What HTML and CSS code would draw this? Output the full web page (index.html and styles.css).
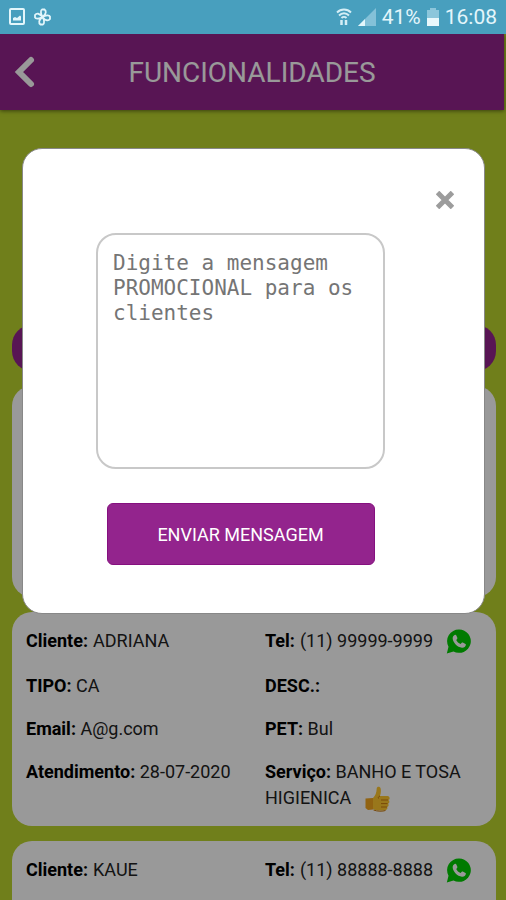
FILE: index.html
```html
<!DOCTYPE html>
<html lang="pt-BR">
<head>
<meta charset="utf-8">
<meta name="viewport" content="width=device-width, initial-scale=1">
<title>Funcionalidades</title>
<link rel="stylesheet" href="styles.css">
</head>
<body>
<svg class="defs" aria-hidden="true">
  <symbol id="whatsapp" viewBox="0 0 24 24">
    <path fill="#00cc00" d="M12.6 0.5a11.2 11.2 0 1 1-5.4 21L0.8 23.4 2.4 17A11.2 11.2 0 0 1 12.6 0.5z"/>
    <path fill="#fff" d="M8.6 5.5c.5-.2 1-.1 1.2.4l1.1 2.6c.1.4 0 .7-.2 1l-.9 1.1c.9 1.8 2.3 3.1 4.2 3.9l1.1-1.3c.3-.3.6-.4 1-.2l2.6 1.3c.4.2.5.5.4.9-.3 1.900-1.900 3-3.800 2.800C10.800 17.400 6.700 13 6.400 9.100c-.1-1.500.8-3 2.200-3.600z"/>
  </symbol>
</svg>

<div class="status">
  <div class="status-group">
    <svg width="16" height="18" viewBox="0 0 16 18" fill="none" stroke="#e3f6fb" stroke-width="2"><rect x="1" y="1" width="14" height="15" rx="1"/><path d="M4 12.500V10l2-1 2 1 3-2.500 1 1v4z" fill="#e3f6fb" stroke="none"/></svg>
    <svg width="17" height="18" viewBox="0 0 17 18" fill="none" stroke="#e3f6fb" stroke-width="1.800"><path d="M8.500 9C6.500 6 6.500 2 8 1.500h2.500C12.500 3 12.500 6 8.500 9zM8.500 9c3-2 7-2 7.500-.5V11c-1.500 2-4.500 2-7.500-2zM8.500 9c2 3 2 7 .5 7.500H6.500C4.500 15 4.500 12 8.500 9zM8.500 9C5.500 11 1.500 11 1 9.500V7C2.500 5 5.500 5 8.500 9z"/></svg>
  </div>
  <div class="status-group status-right">
    <svg width="16" height="18" viewBox="0 0 16 18" fill="none" stroke="#d5eef6" stroke-width="1.900"><path d="M1 4.500c4-4 10-4 14 0M3 7.500c3-3 7-3 10 0M5.500 10c1.500-1.500 3.500-1.500 5 0"/><path d="M5.500 12v5M10 12v5" stroke-width="2.500"/></svg>
    <svg width="18" height="18" viewBox="0 0 18 18"><path d="M0 18 18 0v18z" fill="#84c1d8"/><path d="M0 18 7 11v7z" fill="#e3f6fb"/></svg>
    <span>41%</span>
    <svg width="12" height="18" viewBox="0 0 12 18"><path d="M3 0h6v2h3v16H0V2h3z" fill="#8cc6db"/><path d="M0 10h12v8H0z" fill="#e9f8fc"/></svg>
    <span>16:08</span>
  </div>
</div>

<div class="app">
  <header class="topbar">
    <button class="back" type="button" aria-label="Voltar">
      <svg width="22" height="34" viewBox="0 0 22 34" fill="none" stroke="#fff" stroke-width="6" stroke-linecap="round" stroke-linejoin="miter"><path d="M17 5 5 17l12 12"/></svg>
    </button>
    <h1>FUNCIONALIDADES</h1>
  </header>

  <main class="content">
    <div class="pill"></div>
    <section class="card"></section>
    <section class="card">
      <p class="first"><b>Cliente:</b> ADRIANA</p>
      <p class="first"><b>Tel:</b> (11) 99999-9999 <a href="#" aria-label="WhatsApp"><svg width="25" height="25"><use href="#whatsapp"/></svg></a></p>
      <p><b>TIPO:</b> CA</p>
      <p><b>DESC.:</b></p>
      <p><b>Email:</b> A@g.com</p>
      <p><b>PET:</b> Bul</p>
      <p><b>Atendimento:</b> 28-07-2020</p>
      <p><b>Serviço:</b> BANHO E TOSA HIGIENICA
        <svg class="thumb" width="26" height="26" viewBox="0 0 26 26"><path fill="#ffc72e" d="M9 12c2.500-2.500 3.500-5 3.700-9.500.1-2.300 3.500-2.500 4 .2.400 2.500.1 5-.7 7.300h7.500c2.600 0 2.800 3.600.8 4 1.500.5 1.400 3.200-.4 3.600 1.200.8.800 3.200-.8 3.400.8 1.200.2 3-1.800 3.200-4 .5-8.300.5-11.300-.7L8 22.500z"/><path fill="#f2a51f" d="M1.500 12.500 9 12v11.500l-5 .500-2.500-2z"/><path fill="none" stroke="#c97a10" stroke-width="1" d="M16 10c-1.500.5-2 1.500-1.500 2.500M17 14h7M17 17.600h6.500M17 21h6M9.500 24c4 1.500 9 1.500 12 .5"/></svg></p>
    </section>
    <section class="card">
      <p class="first"><b>Cliente:</b> KAUE</p>
      <p class="first"><b>Tel:</b> (11) 88888-8888 <a href="#" aria-label="WhatsApp"><svg width="25" height="25"><use href="#whatsapp"/></svg></a></p>
    </section>
  </main>

  <div class="overlay">
    <form class="modal" role="dialog" aria-label="Enviar mensagem">
      <button class="close" type="button" aria-label="Fechar">
        <svg width="18" height="18" viewBox="0 0 18 18" stroke="#9c9c9c" stroke-width="5"><path d="M1.500 1.500l15 15M16.500 1.500l-15 15"/></svg>
      </button>
      <div class="fields">
        <textarea aria-label="Mensagem" placeholder="Digite a mensagem PROMOCIONAL para os clientes"></textarea>
        <button class="send" type="submit">ENVIAR MENSAGEM</button>
      </div>
    </form>
  </div>
</div>
</body>
</html>
```
FILE: styles.css
```css
* {
  box-sizing: border-box;
}

body {
  margin: 0;
  height: 100vh;
  display: flex;
  flex-direction: column;
  overflow: hidden;
  background: #bbd42d;
  font-family: Roboto, "Liberation Sans", sans-serif;
  color: #000;
}

button {
  border: 0;
  padding: 0;
  background: none;
  font-family: inherit;
}

svg {
  display: block;
}

.defs {
  position: absolute;
  width: 0;
  height: 0;
}

.status {
  display: flex;
  flex: none;
  align-items: center;
  justify-content: space-between;
  height: 34px;
  padding: 0 9px;
  background: #489fbe;
  color: #e3f6fb;
  font-size: 21px;
}

.status-group {
  display: flex;
  align-items: center;
  gap: 9px;
}

.status-right {
  gap: 6px;
}

.app {
  position: relative;
  flex: 1;
  min-height: 0;
  overflow: hidden;
}

.topbar {
  display: grid;
  grid-template-columns: 48px 1fr 48px;
  align-items: center;
  height: 76px;
  margin-right: 2px;
  background: #93248d;
  box-shadow: 0 1px 4px rgba(0, 0, 0, 0.5);
  color: #fff;
}

.back {
  padding-left: 14px;
}

h1 {
  margin: 0;
  font-size: 28px;
  font-weight: 400;
  text-align: center;
}

.content {
  display: flex;
  flex-direction: column;
  gap: 15px;
  padding: 215px 10px 15px 12px;
}

.pill {
  height: 46px;
  border-radius: 20px;
  background: #93248d;
}

.card {
  display: grid;
  grid-template-columns: 222px 1fr;
  align-content: start;
  gap: 17px;
  min-height: 211px;
  padding: 14px;
  border-radius: 20px;
  background: #fff;
  color: #222;
  font-size: 18px;
  font-weight: 400;
  line-height: 26px;
}

.card p {
  margin: 0;
}

.card b {
  color: #000;
  font-weight: 700;
}

.card .first {
  display: flex;
  align-items: center;
  gap: 5px;
  height: 30px;
}

.first a {
  margin-left: 8px;
}

.thumb {
  display: inline-block;
  margin-left: 8px;
  vertical-align: middle;
}

.overlay {
  position: absolute;
  inset: 0;
  padding: 114px 21px 0 22px;
  background: rgba(0, 0, 0, 0.4);
}

.modal {
  display: flex;
  flex-direction: column;
  padding: 42px 0 48px;
  border: 1px solid #888;
  border-radius: 20px;
  background: #fff;
}

.close {
  align-self: flex-end;
  margin-right: 30px;
}

.fields {
  display: flex;
  flex-direction: column;
  align-items: center;
  gap: 34px;
  padding: 24px 26px 0 0;
}

textarea {
  width: 289px;
  height: 236px;
  padding: 16px 15px;
  border: 2px solid #c8c8c8;
  border-radius: 20px;
  background: #fff;
  font: 21px/25px "DejaVu Sans Mono", monospace;
  overflow: hidden;
  resize: none;
}

textarea::placeholder {
  color: #757575;
}

.send {
  width: 268px;
  height: 62px;
  border: 1px solid #85107f;
  border-radius: 6px;
  background: #93248d;
  color: #fff;
  font-size: 18px;
}
```
